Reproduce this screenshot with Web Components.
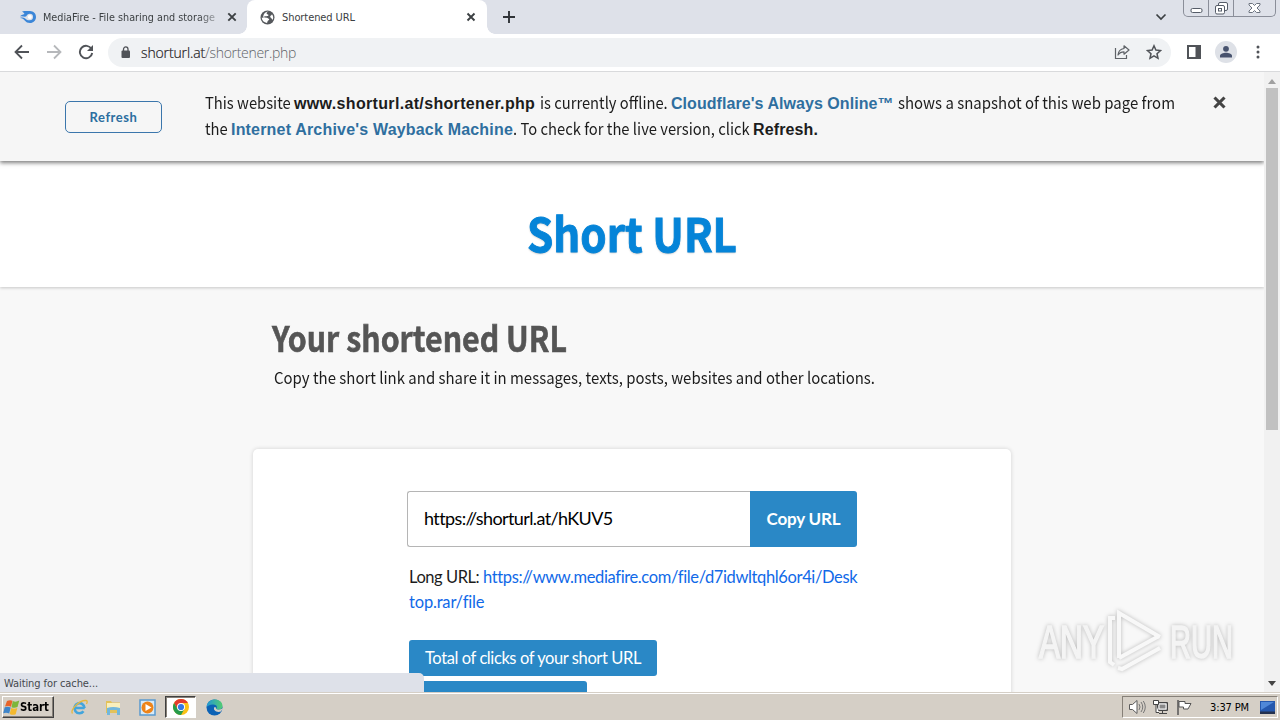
<!DOCTYPE html>
<html lang="en">
<head>
<meta charset="utf-8">
<title>Shortened URL</title>
<style>
html,body{margin:0;height:100%;overflow:hidden}
body{font-family:"Lato",sans-serif;width:1280px;height:720px}
</style>
</head>
<body>
<desktop-shell>
  <tab-strip slot="top"></tab-strip>
  <address-bar slot="top"></address-bar>
  <page-view slot="page">
    <offline-banner></offline-banner>
    <site-header></site-header>
    <page-intro></page-intro>
    <result-card></result-card>
  </page-view>
  <scroll-bar slot="scroll"></scroll-bar>
  <status-bubble slot="over"></status-bubble>
  <play-watermark slot="over"></play-watermark>
  <task-bar slot="bottom"></task-bar>
</desktop-shell>
<script>
function define(name, html, setup) {
  const t = document.createElement('template');
  t.innerHTML = '<style>*,:host{box-sizing:border-box}svg{display:block;flex:none}</style>' + html;
  customElements.define(name, class extends HTMLElement {
    constructor() {
      super();
      this.attachShadow({mode: 'open'}).appendChild(t.content.cloneNode(true));
    }
    connectedCallback() { if (setup) setup(this); }
  });
}

/* One run of text that fills the length given in "w": tracked, or condensed with the "scale" attribute. */
define('fit-text', `<style>:host{display:inline-block;white-space:pre;vertical-align:top}span{display:inline-block;vertical-align:top;transform-origin:0 50%}</style><span><slot></slot></span>`, el => {
  const span = el.shadowRoot.querySelector('span');
  const n = el.textContent.length;
  const w = parseFloat(el.getAttribute('w'));
  el.style.width = w + 'px';
  const natural = span.getBoundingClientRect().width;
  if (el.hasAttribute('scale')) span.style.transform = 'scaleX(' + w / natural + ')';
  else span.style.letterSpacing = ((w - natural) / n) + 'px';
});

define('desktop-shell', `<style>
:host{display:flex;flex-direction:column;width:1280px;height:720px;position:relative;background:#f8f8f8}
.mid{flex:1;display:flex;min-height:0;overflow:hidden}
</style><slot name="top"></slot><div class="mid"><slot name="page"></slot><slot name="scroll"></slot></div><slot name="bottom"></slot><slot name="over"></slot>`);

define('tab-strip', `<style>
:host{display:flex;height:34px;background:#dee1e9;font:11px "DejaVu Sans Condensed","DejaVu Sans",sans-serif;color:#3c4043;position:relative}
.tab{display:flex;align-items:center;height:34px}
.a{width:247px;padding-left:20px}
.a .t{width:176px;margin-left:7px;-webkit-mask-image:linear-gradient(90deg,#000 155px,rgba(0,0,0,.25) 176px)}
.a .x{margin-left:8px}
.b{width:240px;padding-left:13px;background:#fff;border-radius:8px 8px 0 0;position:relative}
.b:before,.b:after{content:"";position:absolute;bottom:0;width:8px;height:8px}
.b:before{left:-8px;background:radial-gradient(circle at 0 0,transparent 7.5px,#fff 8px)}
.b:after{right:-8px;background:radial-gradient(circle at 100% 0,transparent 7.5px,#fff 8px)}
.b .t{margin-left:7px;flex:1}.b .x{margin-right:11px}
.plus{margin:10px 0 0 15px}
.chev{margin:13px 0 0 auto}
.win{width:93px;height:17px;margin:0 4px 0 16px;border:1px solid #8a8e99;border-top:0;border-radius:0 0 5px 5px;display:flex}
.win i{border-right:1px solid #8a8e99;width:25px;display:flex;justify-content:center}
.win i:last-child{border:0;width:41px}
</style>
<div class="tab a"><svg width="16" height="14" viewBox="0 0 16 14"><path fill="#3b86d8" fill-rule="evenodd" d="M2 1.500C5 .6 8 1 10 1.100c3.500.1 6 2.500 6 5.900s-2.600 6-6 6c-2.200 0-4-.8-5.300-2.500C3.500 9 2.500 8.300 0 8c2-.8 4-.5 5.500.8C7 10 8 10.500 9.500 10.300A3.400 3.400 0 0 0 13 7a3.200 3.200 0 0 0-3.200-3.200C8 3.800 7 5 6 6.500 4.500 7 2 6 0 6.500c1-1.500 2.500-2 4.500-2.500C4 2.700 3 2 2 1.500z"/><circle cx="9.800" cy="7" r="2" fill="#fff"/></svg>
<div class="t"><fit-text scale w="172">MediaFire - File sharing and storage</fit-text></div>
<svg class="x" width="10" height="10" viewBox="0 0 10 10"><path d="M1.300 1.300l7.400 7.400M8.700 1.300L1.300 8.700" stroke="#3c4043" stroke-width="1.900"/></svg></div>
<div class="tab b"><svg width="15" height="15" viewBox="0 0 15 15"><circle cx="7.500" cy="7.500" r="7" fill="#55585c"/><path fill="#fff" d="M8.500 1.600C7 2 6.300 3 6.800 3.900c.8.600 1.600.4 1.700 1.200 0 .9-1 1.100-2 1.100H4.800c-.8 0-.9.9-.3 1.200l2.500.3c.8.200 1 .8 1.600 1 .8.300.8 1.100-.1 1.500-1 .4-.9 1.600-1.500 2.800C4 12.500 1.800 10.500 1.700 7.500l1.800.4C2.800 5 4.500 2 8.500 1.600zM12 4.300c1.500 1.700 1.500 4.200.7 5.500-.8-.3-.8-1.300-1.600-1.800-.9-.5-1.200-1.300-.7-2 .6-.6 1.300-.7 1.600-1.700z"/></svg>
<div class="t"><fit-text w="73">Shortened URL</fit-text></div>
<svg class="x" width="10" height="10" viewBox="0 0 10 10"><path d="M1.500 1.500l7 7M8.500 1.500l-7 7" stroke="#3c4043" stroke-width="1.900"/></svg></div>
<svg class="plus" width="14" height="14" viewBox="0 0 14 14"><path d="M7 1v12M1 7h12" stroke="#303338" stroke-width="1.900"/></svg>
<svg class="chev" width="12" height="8" viewBox="0 0 12 8"><path d="M1.500 1.500L6 6l4.500-4.500" fill="none" stroke="#3c4043" stroke-width="1.700"/></svg>
<div class="win"><i><svg width="13" height="17"><rect x="1" y="8.500" width="11" height="4" rx="1.500" fill="#fff" stroke="#555c68"/></svg></i><i><svg width="13" height="17"><g fill="#fff" stroke="#555c68"><rect x="3.500" y="2.500" width="9" height="8" rx="1.500"/><rect x=".5" y="5.500" width="9" height="8.500" rx="1.500"/><rect x="3.500" y="8.500" width="3" height="2.500"/></g></svg></i><i><svg width="13" height="17"><path d="M1 3.500h3.500l2 2 2-2H12v1.500L9 8l3 3v1.500H8.500l-2-2-2 2H1V11l3-3-3-3z" fill="#fff" stroke="#6d7480"/></svg></i></div>`);

define('address-bar', `<style>
:host{display:flex;height:38px;background:#fff;border-bottom:1px solid #d9dadc;align-items:center;font:300 14px/20px "Open Sans","Noto Sans",sans-serif;padding-left:14px;color:#5f6368}
.n{margin-right:16px;margin-top:-1px}
.pill{display:flex;align-items:center;width:1063px;height:29px;border-radius:15px;background:#f0f2f4;padding-left:12px;margin-left:-2px}
.d{color:#1f2023;margin-left:9px}
.sh{margin-left:auto;margin-right:16px}.st{margin-right:9px}
.sh,.st{margin-top:-1px}
</style>
<svg class="n" width="16" height="16" viewBox="0 0 16 16"><path d="M15 8H2M8 1.500L1.500 8 8 14.500" fill="none" stroke="#505358" stroke-width="1.800"/></svg>
<svg class="n" width="16" height="16" viewBox="0 0 16 16"><path d="M1 8h13M8 1.500L14.500 8 8 14.500" fill="none" stroke="#b6b8bb" stroke-width="1.800"/></svg>
<svg class="n" width="16" height="16" viewBox="0 0 16 16"><path d="M13.500 5A6.200 6.200 0 1 0 14.200 9" fill="none" stroke="#505358" stroke-width="1.900"/><path d="M15 1v6H9z" fill="#505358"/></svg>
<div class="pill"><svg width="12" height="14" viewBox="0 0 12 14"><rect x="1.500" y="4.500" width="8.500" height="7.500" rx="1" fill="#505358"/><path d="M3.500 5.500V3.200a2.200 2.200 0 0 1 4.500 0V5.500" fill="none" stroke="#505358" stroke-width="1.300"/></svg>
<span class="d"><fit-text w="64" style="-webkit-text-stroke:.2px #1f2023">shorturl.at</fit-text></span><span><fit-text w="91">/shortener.php</fit-text></span>
<svg class="sh" width="16" height="16" viewBox="0 0 16 16"><path d="M1.500 4v10.500h11V11" fill="none" stroke="#5f6368" stroke-width="1.200"/><path d="M10 1.800L15 6l-5 4.200V7.800C7.500 7.800 5.500 8.500 4 11c.3-3.500 2.500-6 6-6.500z" fill="none" stroke="#5f6368" stroke-width="1.200" stroke-linejoin="round"/></svg>
<svg class="st" width="16" height="16" viewBox="0 0 16 16"><path d="M8 1.800l1.900 4.300 4.600.5-3.500 3.100 1 4.600-4-2.400-4 2.400 1-4.600L1.500 6.600l4.600-.5z" fill="none" stroke="#505358" stroke-width="1.500"/></svg></div>
<svg style="margin:-1px 0 0 16px" width="14" height="14" viewBox="0 0 14 14"><path fill="#505358" fill-rule="evenodd" d="M0 0h14v14H0zM2 2v10h6.500V2z"/></svg>
<svg style="margin:-1px 0 0 14px" width="22" height="22" viewBox="0 0 22 22"><circle cx="11" cy="11" r="11" fill="#dee1e7"/><circle cx="11" cy="7.800" r="2.900" fill="#48536e"/><path d="M5 16.500v-1.800c0-2 3.500-3 6-3s6 1 6 3v1.800z" fill="#48536e"/></svg>
<svg style="margin:-1px 0 0 19px" width="4" height="14" viewBox="0 0 4 14"><g fill="#505358"><circle cx="2" cy="2" r="1.500"/><circle cx="2" cy="7" r="1.500"/><circle cx="2" cy="12" r="1.500"/></g></svg>`);

define('page-view', `<style>:host{display:block;width:1264px;height:620px;overflow:hidden;background:#f8f8f8}</style><slot></slot>`);

define('offline-banner', `<style>
:host{display:flex;height:89px;background:#f6f6f6;box-shadow:0 2px 4px rgba(0,0,0,.5);position:relative;font:16.500px/24px "Noto Sans CJK SC",sans-serif;color:#1c1c1c}
.btn{margin:29px 0 0 65px;width:97px;height:32px;border:1px solid #3b76ac;border-radius:5px;color:#2c6ea0;font:700 13px/31px "Lato",sans-serif;text-align:center;flex:none}
.m{margin:18px 0 0 43px;width:1003px}
.l{display:flex;height:26px}
b{display:block;font:700 16px/27px "Liberation Sans",Arial,sans-serif}
a{display:block;color:#2f6f9f}
svg{margin-top:24px}
</style><div class="btn"><fit-text w="48">Refresh</fit-text></div>
<div class="m"><div class="l"><fit-text scale w="89">This website </fit-text><b><fit-text w="246">www.shorturl.at/shortener.php </fit-text></b><fit-text scale w="131">is currently offline. </fit-text><a><b><fit-text w="227">Cloudflare's Always Online™ </fit-text></b></a><fit-text scale w="277">shows a snapshot of this web page from</fit-text></div>
<div class="l"><fit-text scale w="26">the </fit-text><a><b><fit-text w="282">Internet Archive's Wayback Machine</fit-text></b></a><fit-text scale w="240">. To check for the live version, click </fit-text><b><fit-text w="65">Refresh.</fit-text></b></div></div>
<svg width="13" height="13" viewBox="0 0 13 13" style="margin-left:5px"><path d="M1.500 1.500l10 10M11.500 1.500l-10 10" stroke="#444" stroke-width="3.100"/></svg>`);

define('site-header', `<style>
:host{display:flex;height:126px;background:#fff;box-shadow:0 1px 3px rgba(0,0,0,.2);justify-content:center;font:700 46px/60px "Noto Sans CJK SC",sans-serif;color:#0584d8;text-shadow:0 1px 2px rgba(0,0,0,.25);-webkit-text-stroke:.9px #0584d8}
h1{font:inherit;margin:41px 0 0}
</style><h1><fit-text scale w="210">Short URL</fit-text></h1>`);

define('page-intro', `<style>
:host{display:block;height:162px;padding:30px 0 0 272px;font-family:"Noto Sans CJK SC",sans-serif;color:#555}
h2{font:700 35px/40px "Noto Sans CJK SC",sans-serif;margin:0;-webkit-text-stroke:.6px #555}
p{margin:8px 0 0 2px;font-size:16.500px;line-height:24px;color:#1c1c1c}
</style><h2><fit-text scale w="295">Your shortened URL</fit-text></h2><p><fit-text scale w="601">Copy the short link and share it in messages, texts, posts, websites and other locations.</fit-text></p>`);

define('result-card', `<style>
:host{display:block;width:758px;height:300px;margin-left:253px;background:#fff;border-radius:5px;box-shadow:0 0 4px rgba(0,0,0,.16);padding:42px 0 0 154px;color:#1c1c1c;font:16.500px/25px "Lato",sans-serif}
.row{display:flex;width:450px;height:56px}
.in{flex:1;border:1px solid #b5b5b5;border-right:0;border-radius:3px 0 0 3px;padding-left:16px;font-size:18px;line-height:53px;color:#000}
.copy{width:107px;background:#2a88c6;color:#fff;border-radius:0 3px 3px 0;text-align:center;font-weight:700;font-size:17px;line-height:56px}
.long{margin:18px 0 0 2px}.long div{display:flex}
a{color:#1069e8}
.bt{margin:25px 0 0 2px;background:#2a88c6;border-radius:3px;width:248px;height:36px;color:#fff;line-height:37px;padding-left:16px}
.bt+.bt{width:178px;margin-top:5px}
</style><div class="row"><div class="in"><fit-text w="188">https://shorturl.at/hKUV5</fit-text></div><div class="copy"><fit-text w="74">Copy URL</fit-text></div></div>
<div class="long"><div><fit-text w="74">Long URL: </fit-text><a><fit-text w="373">https://www.mediafire.com/file/d7idwltqhl6or4i/Desk</fit-text></a></div><div><a><fit-text w="75">top.rar/file</fit-text></a></div></div>
<div class="bt"><fit-text w="216">Total of clicks of your short URL</fit-text></div><div class="bt"></div>`);

define('scroll-bar', `<style>
:host{display:flex;flex-direction:column;align-items:center;width:16px;height:620px;background:#f1f1f1}
i{width:12px;height:342px;background:#c1c1c1;margin-top:4px}
</style><svg style="margin-top:7px" width="8" height="5"><path d="M0 5l4-5 4 5z" fill="#a0a0a0"/></svg><i></i><svg style="margin:auto 0 6px" width="8" height="5"><path d="M0 0l4 5 4-5z" fill="#444"/></svg>`);

define('status-bubble', `<style>
:host{display:block;position:absolute;left:0;top:673px;width:424px;height:19px;background:#dee1e9;border-radius:0 5px 0 0;padding-left:4px;font:11px/21px "DejaVu Sans Condensed","DejaVu Sans",sans-serif;color:#45484d}
</style><fit-text w="94">Waiting for cache...</fit-text>`);

define('play-watermark', `<style>
:host{display:flex;position:absolute;left:1036px;top:608px;width:200px;height:66px;filter:drop-shadow(0 0 2px rgba(0,0,0,.25))}
svg{overflow:visible}
text{font:400 46px "Liberation Sans Narrow","Liberation Sans",sans-serif}
</style><svg width="200" height="66" viewBox="-2 0 200 66"><g fill="#f4f4f4" stroke="#f4f4f4" stroke-width="1.600"><text x="1" y="50" textLength="65" lengthAdjust="spacingAndGlyphs">ANY</text><text x="132" y="50" textLength="63" lengthAdjust="spacingAndGlyphs">RUN</text></g><path d="M77 10h-5v44l4 3M81 50V5l41 24M81 50l40-22M80 60l4 1 38-21" fill="none" stroke="#f8f8f8" stroke-width="4"/></svg>`);

define('task-bar', `<style>
:host{display:flex;height:28px;background:#d5cfc6;border-top:1px solid #d5cfc6;box-shadow:inset 0 1px #fff;align-items:center;font:11px "DejaVu Sans Condensed","DejaVu Sans",sans-serif;color:#000}
.start{width:52px;height:22px;margin:1px 0 0 2px;border:1px solid;border-color:#fff #404040 #404040 #fff;box-shadow:inset -1px -1px #868078;display:flex;align-items:center;font-weight:700;font-size:12px}
.ic{margin-top:2px}
.on{width:31px;height:22px;margin:1px 0 0 9px;background:#fff;border:1px solid;border-color:#404040 #fff #fff #404040;box-shadow:inset 1px 1px #868078;display:flex;align-items:center;justify-content:center}
.tray{margin:1px 2px 0 auto;width:156px;height:22px;border:1px solid;border-color:#868078 #fff #fff #868078;display:flex;align-items:center}
</style>
<div class="start"><svg width="17" height="17" viewBox="0 0 17 17"><path d="M4 2q3-1.500 5.500-.3L8 7.800Q5.500 6.300 2 7.500z" fill="#e8642a"/><path d="M9.800 2q3 1.500 6.500-.5L14.500 8q-3 1.500-6 .2z" fill="#7db63b"/><path d="M1.700 8.300Q4.900 7 7.700 8.600L6.200 14.500q-3-1.500-6-.2z" fill="#3f85c9"/><path d="M8.200 9q3 1.500 6.100 0L12.700 15.200q-3 1.300-6-.3z" fill="#f4b92d"/></svg><fit-text scale w="29">Start</fit-text></div>
<svg class="ic" style="margin-left:17px" width="17" height="17" viewBox="0 0 17 17"><path d="M13.700 9H4.500M13.500 9A5 5 0 1 0 12.500 12.200" fill="none" stroke="#43a5dc" stroke-width="2.600"/><path d="M1.500 14.500C-1 11 8 1 15 1.500c2 .2 1 2.500.5 3.500" fill="none" stroke="#e6b83f" stroke-width="1.300"/></svg>
<svg class="ic" style="margin-left:17px" width="17" height="17" viewBox="0 0 17 17"><path d="M1 2h5l1 1.500h8V14H1z" fill="#e3c25a"/><path d="M2 4h13v5H2z" fill="#f9efbc"/><path d="M2 16V9q6-2 13 0v7h-3v-5H5v5z" fill="#72b7dc"/></svg>
<svg class="ic" style="margin-left:17px" width="17" height="17" viewBox="0 0 17 17"><path d="M1 1h15v15H1z" fill="#d8eaf7" stroke="#5a9bd0" stroke-width="1.500"/><circle cx="8.500" cy="8.500" r="6" fill="#ee8419"/><path d="M6.500 5l6 3.500-6 3.500z" fill="#fff"/></svg>
<div class="on"><svg width="16" height="16" viewBox="0 0 16 16"><circle cx="8" cy="8" r="8" fill="#fbc116"/><path d="M1.070 4A8 8 0 0 1 14.930 4H8L4.540 10z" fill="#e33b2e"/><path d="M1.070 4A8 8 0 0 0 8 16l3.460-6-6.920 0z" fill="#269b4b"/><circle cx="8" cy="8" r="4" fill="#fff"/><circle cx="8" cy="8" r="3.100" fill="#3478e5"/></svg></div>
<svg class="ic" style="margin-left:10px" width="17" height="17" viewBox="0 0 17 17"><defs><linearGradient id="g"><stop stop-color="#2497d5"/><stop offset="1" stop-color="#52cc72"/></linearGradient></defs><circle cx="8.500" cy="8.500" r="8" fill="#0c62b5"/><path d="M.6 8C1-2 16.500-1.500 16.500 7c0 4-5 4.500-6.500 3 2-2 .5-4.500-3-4.500S1.500 7 .6 8z" fill="url(#g)"/><path d="M8.500 8c-2 3 2 6 6.500 4.500l2-3.500c-3 2.500-8 2-7-.5z" fill="#d5cfc6"/></svg>
<div class="tray"><svg style="margin-left:5px" width="18" height="16" viewBox="0 0 18 16"><path d="M1.500 5.500h3L9 1.500v13l-4.500-4h-3z" fill="#fff" stroke="#5b5b5b"/><path d="M11 5q2 3 0 6M13 3q3.500 5 0 10M15.300 2q4 6 0 12" fill="none" stroke="#777"/></svg>
<svg style="margin-left:6px" width="17" height="16" viewBox="0 0 17 16"><path d="M5.500 3.500h10v8h-10z" fill="#999" stroke="#444"/><path d="M7 5h7v5H7z" stroke="#fff" fill="#888"/><path d="M7 14.500h8M10.500 12v2" stroke="#444"/><path d="M1.500 1.500h5v4h-5zM4 5.500v8h3" fill="#fff" stroke="#444"/></svg>
<svg style="margin-left:7px" width="17" height="16" viewBox="0 0 17 16"><path d="M2 1v15" stroke="#555" stroke-width="1.500"/><path d="M3 2.500h6v2h6l-3 5.500H7.500V8H3z" fill="#fff" stroke="#555"/></svg>
<span style="margin-left:17px"><fit-text w="39">3:37 PM</fit-text></span>
<svg style="margin-left:11px" width="15" height="13" viewBox="0 0 15 13"><path d="M0 0h15v11H0z" fill="#2458ae"/><path d="M1 1h13L1 9z" fill="#4f88d8"/><path d="M0 10.500h15V13H0z" fill="#23314f"/></svg></div>`);
</script>
</body>
</html>
